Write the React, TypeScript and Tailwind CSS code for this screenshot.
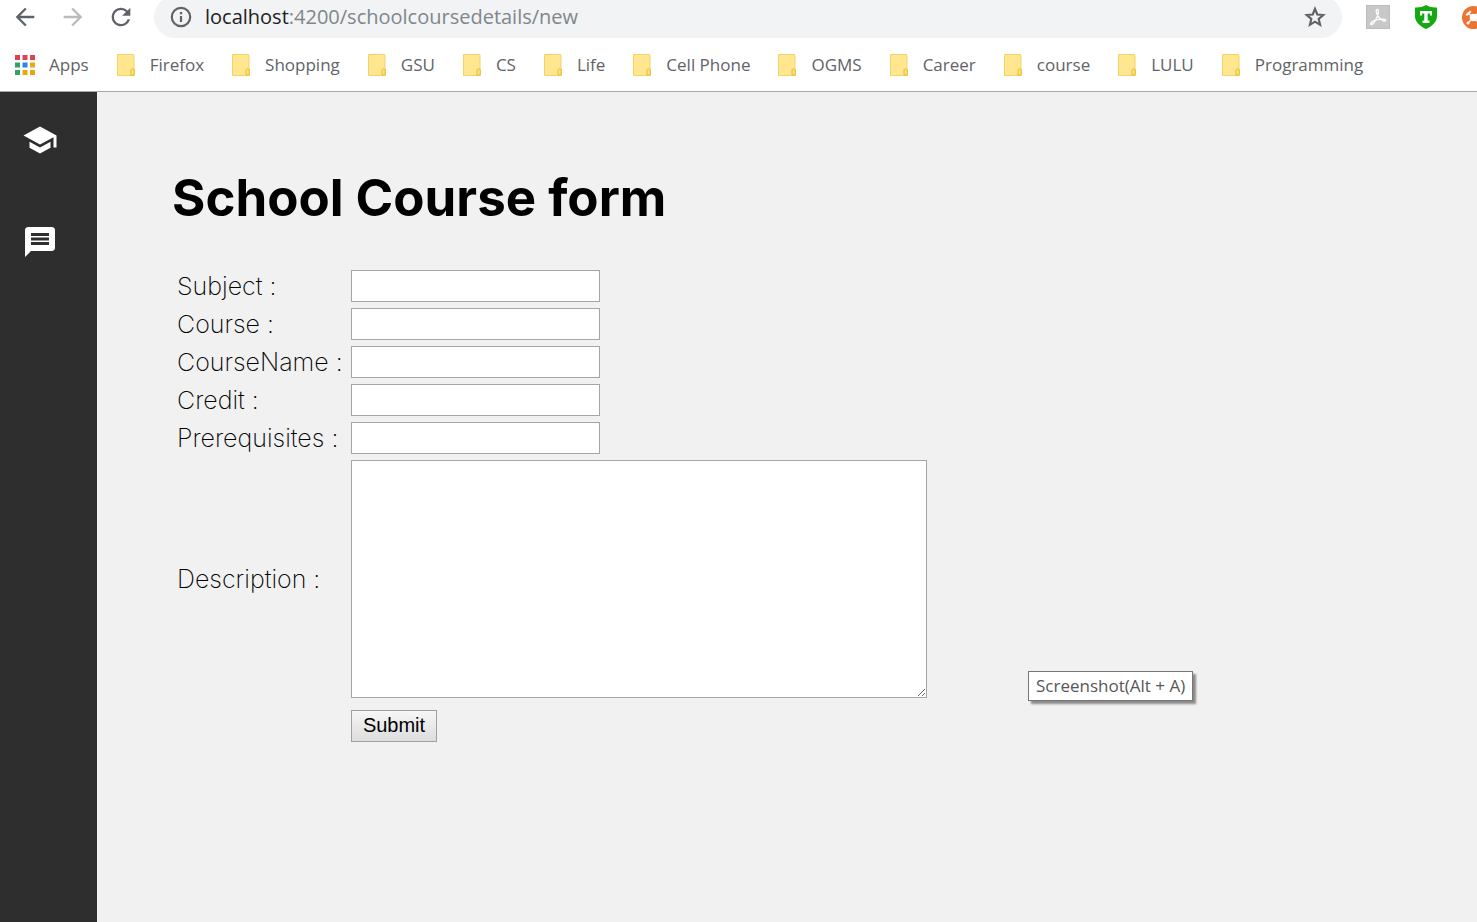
import { MdArrowBack, MdArrowForward, MdMessage, MdRefresh, MdSchool } from 'react-icons/md'

const bookmarks = ['Firefox', 'Shopping', 'GSU', 'CS', 'Life', 'Cell Phone', 'OGMS', 'Career', 'course', 'LULU', 'Programming']

const appColors = ['#db4453', '#db4453', '#db4453', '#34a064', '#2a87e8', '#e9a90e', '#34a064', '#e9a90e', '#e9a90e']

const fields = [
  { id: 'subject', label: 'Subject :' },
  { id: 'course', label: 'Course :' },
  { id: 'courseName', label: 'CourseName :' },
  { id: 'credit', label: 'Credit :' },
  { id: 'prerequisites', label: 'Prerequisites :' },
]

function AppsIcon() {
  return (
    <svg className="h-5 w-5 shrink-0" viewBox="0 0 20 20" aria-hidden="true">
      {appColors.map((color, i) => (
        <rect key={i} x={(i % 3) * 7.5} y={Math.floor(i / 3) * 7.5} width="5" height="5" fill={color} />
      ))}
    </svg>
  )
}

function InfoIcon() {
  return (
    <svg className="h-6 w-6 shrink-0" viewBox="0 0 24 24" fill="none" stroke="currentColor" strokeWidth="2.2" aria-hidden="true">
      <circle cx="12" cy="12" r="9.2" />
      <path d="M12 11v6M12 7v2.200" />
    </svg>
  )
}

function StarIcon() {
  return (
    <svg className="h-[26px] w-[26px]" viewBox="0 0 24 24" fill="none" stroke="currentColor" strokeWidth="2" aria-hidden="true">
      <path d="M12 4.500l2.100 5.200 5.500.45-4.200 3.650 1.300 5.400L12 16.300l-4.700 2.900 1.300-5.400L4.400 10.150l5.500-.45z" />
    </svg>
  )
}

function FolderIcon() {
  return (
    <svg className="h-[22px] w-[18px] shrink-0" viewBox="0 0 18 22" aria-hidden="true">
      <path d="M.5.5h15.8q.7 0 .7.7v13.3l.5.8v6.2H.5z" fill="#ffe68f" stroke="#f0d468" />
      <path d="M14 21v-4.5q0-1.7 1.6-1.7t1.6 1.7V20q0 1.2-1.2 1.2z" fill="#ffe27a" stroke="#e6bd35" />
    </svg>
  )
}

function PdfIcon() {
  return (
    <svg className="h-6 w-6 shrink-0" viewBox="0 0 24 24" aria-hidden="true">
      <rect width="24" height="24" fill="#bdbdbd" />
      <rect x="1" y="1" width="22" height="22" fill="#c8c8c8" />
      <path d="M11 4.5c2-.5 1.8 3 .2 7-1.6 4-4.2 8-6 8-1.5 0-.4-2.5 3-3.9 4-1.6 10.3-2.2 11.3-.7.9 1.5-2.5 1.7-5-.8-3.5-3.5-5.5-9-3.5-9.600z" fill="none" stroke="#fff" strokeWidth="1.3" />
    </svg>
  )
}

function ShieldIcon() {
  return (
    <svg className="h-6 w-[22px] shrink-0" viewBox="0 0 22 24" aria-hidden="true">
      <path d="M11 0C8 2 4 2.600 0 2.400V11c0 6 5 10.500 11 13 6-2.500 11-7 11-13V2.400C18 2.600 14 2 11 0z" fill="#12a912" />
      <path d="M5 6h12v4.500h-2V8.600h-2.300v7h1.800V18h-7v-2.400h1.800v-7H7v1.900H5z" fill="#fff" />
    </svg>
  )
}

function HubIcon() {
  return (
    <svg className="h-[23px] w-[23px] shrink-0" viewBox="0 0 23 23" aria-hidden="true">
      <circle cx="11.5" cy="11.5" r="11.5" fill="#ee7230" />
      <path d="M6 7l11 10M6 17L17 6" stroke="#fff" strokeWidth="1.3" />
      <circle cx="11.5" cy="11.5" r="3.8" fill="#fff" />
      <path d="M3.500 8.500L8 4.500l1.500 1.500L5 10z" fill="#fff" />
      <circle cx="6" cy="17" r="1.5" fill="#fff" />
      <circle cx="17" cy="6" r="1.5" fill="#fff" />
      <circle cx="17" cy="17" r="1.5" fill="#fff" />
    </svg>
  )
}

function BrowserBar() {
  return (
    <header className="overflow-hidden border-b border-[#a9a9a9] bg-white font-['Open_Sans','Noto_Sans',sans-serif]">
      <div className="-mt-1 -mr-2 flex h-[42px] items-center">
        <div className="flex w-[154px] shrink-0 items-center gap-5 pl-[11px] text-[#5f6368]">
          <button type="button" aria-label="Back"><MdArrowBack size={28} /></button>
          <button type="button" aria-label="Forward" className="text-[#b9bbbd]"><MdArrowForward size={28} /></button>
          <button type="button" aria-label="Reload"><MdRefresh size={28} /></button>
        </div>
        <div className="flex h-full flex-1 items-center rounded-full bg-[#f1f3f4] pr-3.5 pl-[15px] text-[#5f6368]">
          <InfoIcon />
          <a href="#address" className="flex-1 pl-3 text-xl text-[#80868b]">
            <span className="text-[#202124]">localhost</span>:4200/schoolcoursedetails/new
          </a>
          <button type="button" aria-label="Bookmark this page"><StarIcon /></button>
        </div>
        <div className="flex shrink-0 items-center gap-[25px] pl-6">
          <PdfIcon />
          <ShieldIcon />
          <HubIcon />
        </div>
      </div>
      <nav className="flex h-[53px] items-center gap-7 pl-[15px] text-[17px] whitespace-nowrap text-[#5f6368]" aria-label="Bookmarks">
        <a href="#apps" className="flex items-center gap-3.5"><AppsIcon />Apps</a>
        {bookmarks.map((name) => (
          <a key={name} href={`#${name}`} className="flex items-center gap-[15px]"><FolderIcon />{name}</a>
        ))}
      </nav>
    </header>
  )
}

export default function App() {
  return (
    <div className="flex min-h-screen flex-col bg-[#f1f1f1]">
      <BrowserBar />
      <div className="flex flex-1">
        <nav className="flex w-[97px] shrink-0 flex-col gap-[66px] bg-[#2e2e2e] pt-[30px] pl-[22px] text-white" aria-label="Sections">
          <a href="#school" aria-label="School"><MdSchool size={36} /></a>
          <a href="#messages" aria-label="Messages"><MdMessage size={36} /></a>
        </nav>
        <main className="flex-1 pt-[76px] pl-[75px] font-['Inter',sans-serif] text-black">
          <h1 className="text-[51px] leading-[60px] font-bold">School Course form</h1>
          <form className="mt-[42px] grid grid-cols-[174px_1fr] items-center justify-items-start gap-y-1.5 pl-[5px] text-[25px] font-extralight" onSubmit={(e) => e.preventDefault()}>
            {fields.map((field) => (
              <div key={field.id} className="contents">
                <label htmlFor={field.id} className="leading-8">{field.label}</label>
                <input id={field.id} type="text" className="h-8 w-[249px] border border-[#a6a6a6] bg-white px-1 text-xl" />
              </div>
            ))}
            <label htmlFor="description" className="leading-8">Description :</label>
            <textarea id="description" className="h-[238px] w-[576px] resize border border-[#a6a6a6] bg-white p-1 text-xl" />
            <button type="submit" className="col-start-2 mt-1.5 h-8 w-[86px] border border-[#a0a0a0] bg-linear-to-b from-[#f6f6f6] to-[#dddddd] pb-0.5 font-['Liberation_Sans',sans-serif] text-xl leading-7 font-normal">
              Submit
            </button>
          </form>
        </main>
      </div>
      <div role="tooltip" className="absolute top-[671px] left-[1028px] border border-[#767676] bg-white px-[7px] font-['Open_Sans','Noto_Sans',sans-serif] text-[17px] leading-7 text-[#575757] shadow-[3px_3px_2px_#8c8c8c]">
        Screenshot(Alt + A)
      </div>
    </div>
  )
}
